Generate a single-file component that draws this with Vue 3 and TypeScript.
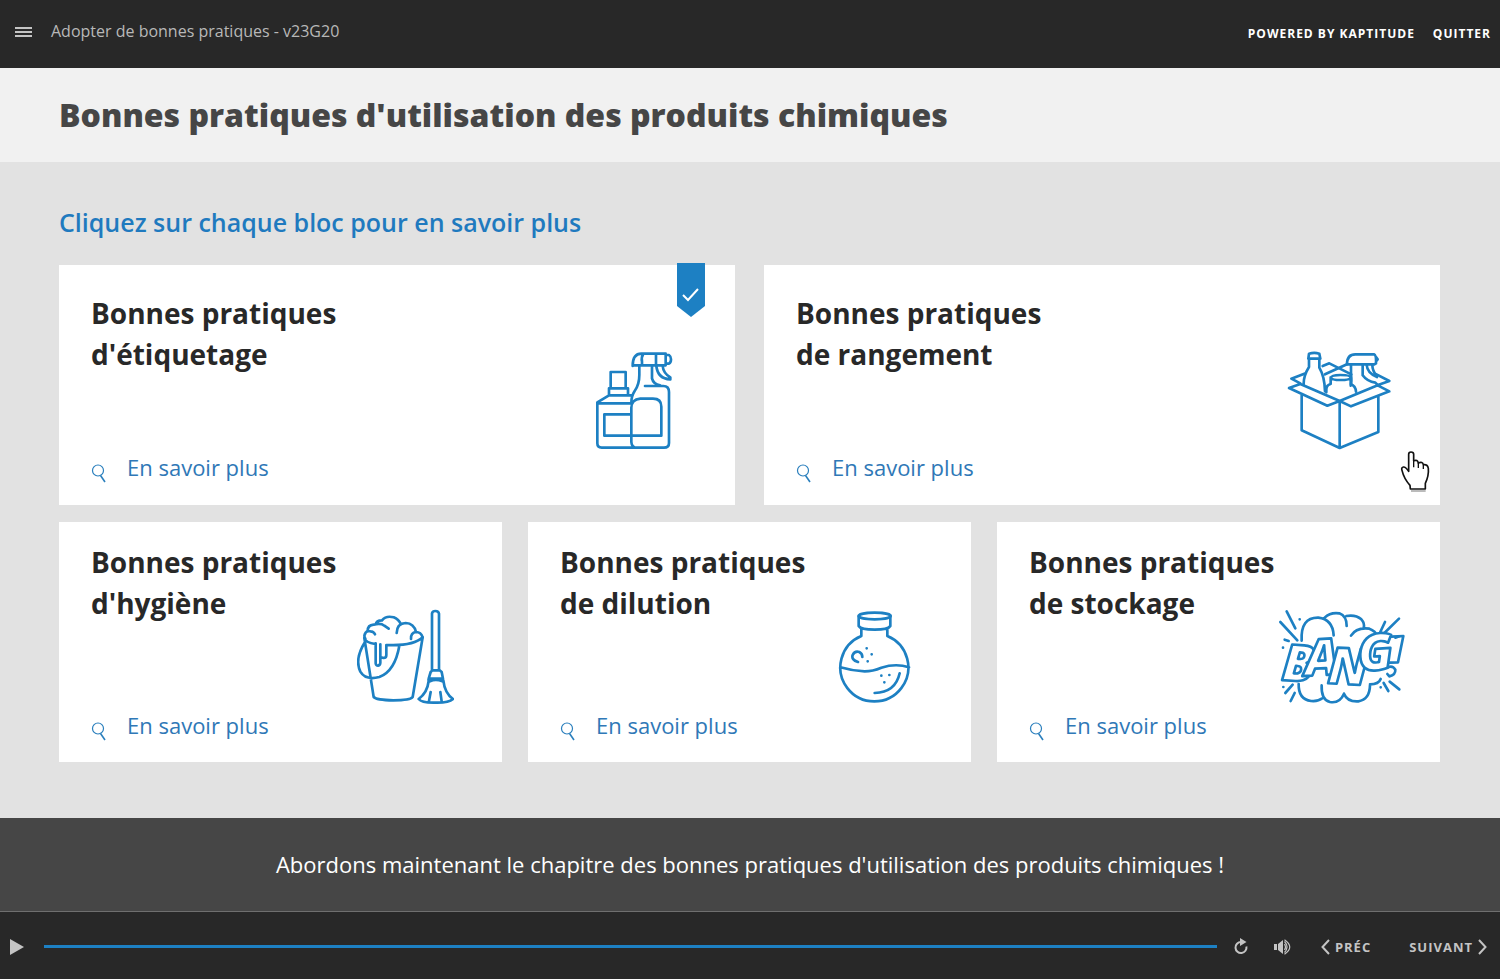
<script setup lang="ts">
import { ref } from 'vue'

interface Topic {
  id: string
  subject: string
  done?: boolean
}

const wideTopics: Topic[] = [
  { id: 'etiquetage', subject: "d'étiquetage", done: true },
  { id: 'rangement', subject: 'de rangement' },
]
const narrowTopics: Topic[] = [
  { id: 'hygiene', subject: "d'hygiène" },
  { id: 'dilution', subject: 'de dilution' },
  { id: 'stockage', subject: 'de stockage' },
]
const rows = [
  { name: 'wide', topics: wideTopics },
  { name: 'narrow', topics: narrowTopics },
]
const progress = ref(100)
</script>

<template>
  <div class="player">
    <header class="topbar">
      <button class="icon-btn menu" aria-label="Menu">
        <svg width="17" height="10" viewBox="0 0 17 10"><path d="M0 1h17M0 5h17M0 9h17" stroke="#c4c4c4" stroke-width="2" /></svg>
      </button>
      <span class="course">Adopter de bonnes pratiques - v23G20</span>
      <nav class="top-links">
        <a href="#kaptitude">POWERED BY KAPTITUDE</a>
        <a href="#quitter">QUITTER</a>
      </nav>
    </header>

    <div class="banner"><h1>Bonnes pratiques d'utilisation des produits chimiques</h1></div>

    <main class="stage">
      <h2>Cliquez sur chaque bloc pour en savoir plus</h2>
      <div v-for="row in rows" :key="row.name" class="row" :class="row.name">
        <article v-for="t in row.topics" :key="t.id" class="card">
          <div class="card-text">
            <h3>Bonnes pratiques<br />{{ t.subject }}</h3>
            <a class="more" :href="'#' + t.id">
              <svg width="15" height="19" viewBox="0 0 15 19" fill="none" stroke="#2a7fbd">
                <circle cx="7" cy="6.5" r="5.5" stroke-width="1.2" />
                <path d="M9.5 11.5 14 18" stroke-width="1.6" />
              </svg>
              <span>En savoir plus</span>
            </a>
          </div>

          <svg v-if="t.id === 'etiquetage'" class="art bottles" width="78" height="99" viewBox="45 288 234 297">
            <path d="M92 397V351H137V397M87 420V400H144V420M87 421 52 442V565Q52 578 65 578H252Q267 578 267 564V411Q267 393 250 393H195M87 421H154M52 445H154M154 478H73V542H244V455Q244 431 219 431H181Q154 434 154 458V561Q155 578 171 578M178 333V360Q178 389 164 408Q154 423 154 443" />
            <path d="M158 333Q158 296 184 296H257V331H158ZM190 296Q183 307 186 320V331M228 296V331M257 300H267Q273 304 273 313Q273 323 267 326H257M216 333V370Q220 387 240 391M229 333Q233 371 271 373V367Q250 355 248 333" />
          </svg>

          <svg v-else-if="t.id === 'rangement'" class="art" width="105" height="99" viewBox="51 49 315 297">
            <path d="M95 179V287L209 340 325 292V184M209 199V340M57 160 91 148 209 199 172 213ZM209 199 323 152 358 170 243 215ZM91 146 64 132 103 117M158 94 178 86 244 119M165 119 231 89M315 117 358 139 324 151" />
            <path d="M117 72V97Q100 124 101 150M148 72V99Q164 126 165 170M115 72 117 57Q133 52 148 57L151 72ZM182 128V148Q169 151 169 165V173M242 128V148Q257 154 258 171M183 129Q184 121 211 121Q242 121 242 129Q239 136 211 136Q186 136 183 129Z" />
            <path d="M231 89Q231 59 256 59H312Q319 61 318 86L313 89H231M318 67 323 74 318 80M243 91V119Q246 142 242 153M278 91V122Q292 141 316 144L323 151M290 91Q292 116 321 127M307 91Q307 108 321 127" />
          </svg>

          <svg v-else-if="t.id === 'hygiene'" class="art low" width="97" height="97" viewBox="36 27 291 291">
            <path d="M58 114 86 291Q94 300 145 301Q196 301 203 291L233 112M58 114Q62 128 91 132M124 135Q205 139 233 112M60 126Q28 177 46 215Q62 242 103 231Q150 213 163 137M92 130V190Q93 197 99 197Q106 195 106 188V133M106 177Q108 171 116 174Q124 174 124 165V135" />
            <path d="M61 116Q55 107 62 98Q66 91 76 94Q86 94 90 103M68 93Q68 75 86 74Q107 68 118 77L131 86M92 73Q94 61 111 61Q123 46 146 52Q161 58 168 73M155 99Q156 70 182 69Q207 70 213 96M198 117Q197 98 213 96Q228 96 233 112" />
            <path d="M261 211V40Q263 33 271 33Q281 33 282 41V211M257 216 262 211H284L290 216 294 236H251ZM251 237Q249 243 255 244Q272 236 292 244M251 243Q247 278 221 297Q230 309 271 308Q311 309 324 297Q299 279 295 241M257 276 252 303M286 276 290 304" />
          </svg>

          <svg v-else-if="t.id === 'dilution'" class="art flask" width="73" height="93" viewBox="39 33 219 279">
            <path d="M101 49V78Q107 89 149 89Q190 89 196 78V49M109 87V108A102 102 0 1 0 187 108V87M46 202Q82 213 119 214Q143 214 169 203Q213 189 252 202M224 220Q211 278 149 279M99 186Q78 179 83 165Q89 152 103 156Q112 161 112 171" />
            <ellipse cx="149" cy="48" rx="48" ry="10" />
            <path d="M125 145h.1M140 163h.1M128 184h.1M169 227h.1M193 225h.1M178 247h.1" />
          </svg>

          <svg v-else class="art bang low" width="127" height="97" viewBox="24 27 381 291">
            <path d="M95 122Q91 52 145 53Q188 58 191 106M164 53Q181 36 208 40Q230 48 230 78M229 48Q257 43 274 58Q285 70 281 84M243 107Q259 81 298 86Q316 92 324 111M86 252Q85 298 123 303Q145 305 157 295M155 256Q153 299 180 306Q209 311 222 281M222 281Q232 306 265 304Q299 299 300 256M300 253Q326 253 332 237M50 34 76 85M31 66 82 121M44 119 56 123M345 66 328 102M387 56 337 105M376 113 388 109M68 254 46 279M74 279 62 303M341 249 355 273M359 245 388 268" />
            <path d="M89 58h.1M39 143h.1M40 261h.1M332 262h.1" />
            <text x="34 106 172 266" y="240 228 250 214" rotate="4 -3 3 -4">BANG</text>
            <path d="M365 110 400 108 384 187 358 188M353 202Q368 195 376 209Q377 225 358 229L352 222" />
          </svg>

          <svg v-if="t.done" class="ribbon" width="28" height="54" viewBox="0 0 28 54" role="img" aria-label="Terminé">
            <path d="M0 0H28V43L14 54 0 43Z" fill="#1d80c3" />
            <path d="M6 32 11 37 21 26" fill="none" stroke="#fff" stroke-width="2" />
          </svg>
          <svg v-if="t.id === 'rangement'" class="pointer" width="30" height="42" viewBox="390 346 90 126">
            <path d="M423 469H467" stroke="#999" stroke-width="4" />
            <path d="M421 463 420 452Q402 432 396 407Q393 399 400 397Q407 396 416 410V359Q416 352 423 352Q431 352 431 359V378Q443 374 445 385Q458 380 460 390Q473 388 475 401Q477 422 466 446V463Z" fill="#fff" stroke="#111" stroke-width="5" stroke-linejoin="round" />
            <path d="M431 378V398M445 385V400M460 390V403" fill="none" stroke="#111" stroke-width="4" />
          </svg>
        </article>
      </div>
    </main>

    <p class="caption">Abordons maintenant le chapitre des bonnes pratiques d'utilisation des produits chimiques !</p>

    <footer class="controls">
      <button class="icon-btn play" aria-label="Lecture">
        <svg width="14" height="16" viewBox="0 0 14 16"><path d="M0 0 14 8 0 16Z" fill="#c4c4c4" /></svg>
      </button>
      <input v-model.number="progress" class="seek" type="range" min="0" max="100" aria-label="Progression" />
      <button class="icon-btn replay" aria-label="Rejouer">
        <svg width="14" height="17" viewBox="0 0 14 17">
          <path d="M7 4A5.5 5.5 0 1 0 12.4 8.5" fill="none" stroke="#c4c4c4" stroke-width="2" />
          <path d="M6 0 12.5 4 6 8Z" fill="#c4c4c4" />
        </svg>
      </button>
      <button class="icon-btn volume" aria-label="Volume">
        <svg width="17" height="16" viewBox="0 0 17 16">
          <path d="M0 5H3V11H0ZM4 5 9 1V15L4 11Z" fill="#c4c4c4" />
          <path d="M10.5 5Q12.5 8 10.5 11M10.5 2.5Q15.5 8 10.5 13.5M10.5 .7Q21 8 10.5 15.3" fill="none" stroke="#c4c4c4" stroke-width="1.2" />
        </svg>
      </button>
      <button class="step prev">
        <svg width="9" height="16" viewBox="0 0 9 16"><path d="M8 1 1.5 8 8 15" fill="none" stroke="#c4c4c4" stroke-width="2" /></svg>
        <span>PRÉC</span>
      </button>
      <button class="step next">
        <span>SUIVANT</span>
        <svg width="9" height="16" viewBox="0 0 9 16"><path d="M1 1 7.5 8 1 15" fill="none" stroke="#c4c4c4" stroke-width="2" /></svg>
      </button>
    </footer>
  </div>
</template>

<style>
body {
  margin: 0;
}
</style>

<style scoped>
.player {
  display: flex;
  flex-direction: column;
  min-height: 100vh;
  background: #e2e2e2;
  color: #282828;
  font-family: 'Open Sans', 'Noto Sans', sans-serif;
}
h1,
h2,
h3,
p {
  margin: 0;
}
svg {
  display: block;
  flex: none;
}
button {
  display: flex;
  align-items: center;
  padding: 0;
  border: 0;
  background: none;
  font-family: inherit;
  cursor: pointer;
}
a {
  text-decoration: none;
}
.topbar {
  display: flex;
  align-items: center;
  height: 68px;
  padding: 0 9px 0 15px;
  background: #282828;
}
.course {
  margin: 0 auto 6px 19px;
  color: #b8b8b8;
  font-size: 16px;
  line-height: 22px;
}
.menu {
  margin-bottom: 4px;
}
.top-links {
  display: flex;
  gap: 18px;
  font-size: 12px;
  font-weight: 700;
  line-height: 18px;
  letter-spacing: 1px;
}
.top-links a {
  color: #fff;
}
.banner {
  padding: 24px 59px;
  background: #f1f1f1;
}
h1 {
  color: #464646;
  font-size: 32px;
  font-weight: 800;
  line-height: 46px;
}
.stage {
  flex: 1;
  padding: 42px 60px 56px 59px;
}
h2 {
  margin-bottom: 25px;
  color: #1f7abf;
  font-size: 25px;
  font-weight: 600;
  line-height: 36px;
}
.row {
  display: grid;
  grid-auto-flow: column;
  grid-auto-columns: 1fr;
}
.wide {
  gap: 29px;
  margin-bottom: 17px;
}
.narrow {
  gap: 26px;
}
.card {
  position: relative;
  display: flex;
  justify-content: space-between;
  min-height: 240px;
  background: #fff;
}
.card-text {
  display: flex;
  flex-direction: column;
  justify-content: space-between;
  padding: 28px 0 22px 32px;
  white-space: nowrap;
}
.narrow .card-text {
  padding-top: 20px;
  padding-bottom: 21px;
}
h3 {
  font-size: 28px;
  font-weight: 700;
  line-height: 41px;
}
.more {
  display: flex;
  align-items: center;
  gap: 21px;
  color: #2f78b7;
  font-size: 22px;
  line-height: 32px;
}
.more svg {
  margin-top: 12px;
}
.art {
  align-self: flex-end;
  margin: 0 48px 55px 0;
  fill: none;
  stroke: #1d80c3;
  stroke-width: 8;
  stroke-linecap: round;
  stroke-linejoin: round;
}
.low {
  margin-bottom: 56px;
}
.bottles {
  margin-right: 62px;
}
.flask {
  margin-right: 60px;
  margin-bottom: 58px;
}
.bang {
  margin-left: -60px;
  margin-right: 35px;
}
.bang text {
  fill: #fff;
  font-family: 'Open Sans', sans-serif;
  font-size: 152px;
  font-style: italic;
  font-weight: 800;
}
.ribbon {
  position: absolute;
  top: -2px;
  right: 30px;
}
.pointer {
  position: absolute;
  right: 10px;
  bottom: 13px;
}
.caption {
  padding: 30px 24px;
  border-bottom: 1px solid #6f6f6f;
  background: #464646;
  color: #fff;
  font-size: 22px;
  line-height: 33px;
  text-align: center;
}
.controls {
  display: flex;
  align-items: center;
  height: 67px;
  padding: 2px 13px 0 10px;
  box-sizing: border-box;
  background: #282828;
}
.seek {
  flex: 1;
  height: 3px;
  margin: 0 17px 0 20px;
  appearance: none;
  background: #1d80c3;
}
.seek::-webkit-slider-thumb {
  width: 1px;
  height: 3px;
  appearance: none;
  background: #1d80c3;
}
.volume {
  margin: 0 30px 0 26px;
}
.step {
  gap: 5px;
  color: #c4c4c4;
  font-size: 13px;
  font-weight: 700;
  line-height: 18px;
  letter-spacing: 1px;
}
.prev {
  margin-right: 38px;
}
</style>
